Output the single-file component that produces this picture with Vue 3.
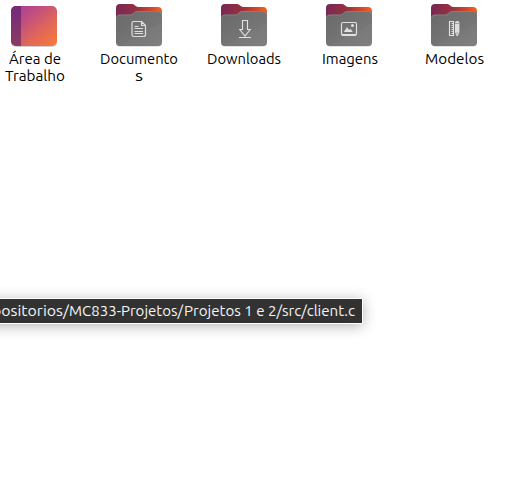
<script setup>
const items = [
  { kind: 'desktop', dx: 1, lines: [{ text: 'Área de', w: 52 }, { text: 'Trabalho', w: 60 }] },
  { kind: 'documents', dx: 0, lines: [{ text: 'Documento', w: 78 }, { text: 's', w: 8 }] },
  { kind: 'downloads', dx: 0, lines: [{ text: 'Downloads', w: 74 }] },
  { kind: 'pictures', dx: 1, lines: [{ text: 'Imagens', w: 56 }] },
  { kind: 'templates', dx: 0.5, lines: [{ text: 'Modelos', w: 59 }] },
]
</script>

<template>
  <main class="desktop">
    <section class="grid">
      <article v-for="item in items" :key="item.kind" class="item">
        <svg class="icon" width="48" height="48" viewBox="0 0 48 48">
          <defs>
            <linearGradient id="desk" x1="0" y1="0" x2="1" y2="1">
              <stop offset="0" stop-color="#a83a98" />
              <stop offset=".3" stop-color="#bd4c83" />
              <stop offset=".65" stop-color="#e16758" />
              <stop offset="1" stop-color="#fa7b36" />
            </linearGradient>
            <linearGradient id="side" x1="0" y1="0" x2="0" y2="1">
              <stop offset="0" stop-color="#75297a" />
              <stop offset="1" stop-color="#8a3c62" />
            </linearGradient>
            <linearGradient id="back" x1="0" y1="0" x2="1" y2="0">
              <stop offset="0" stop-color="#782854" />
              <stop offset=".45" stop-color="#98303f" />
              <stop offset=".8" stop-color="#d84a28" />
              <stop offset="1" stop-color="#f86126" />
            </linearGradient>
            <linearGradient id="front" x1="0" y1="0" x2="1" y2="1">
              <stop offset="0" stop-color="#696969" />
              <stop offset="1" stop-color="#7d7d7d" />
            </linearGradient>
            <clipPath id="deskclip"><rect x="1" y="6" width="46" height="40" rx="5" /></clipPath>
          </defs>
          <g v-if="item.kind === 'desktop'">
            <rect x="1" y="7" width="46" height="40" rx="5" fill="#000" opacity=".18" />
            <g clip-path="url(#deskclip)">
              <rect x="1" y="6" width="46" height="40" fill="url(#desk)" />
              <rect x="1" y="6" width="10" height="40" fill="url(#side)" />
            </g>
          </g>
          <g v-else>
            <path d="M1 18V8q0-4 4-4h12q1.500 0 2.500 1l1.500 1.200q1 .8 2.500.8H43q4 0 4 4v7z" fill="url(#back)" />
            <path d="M1 19h46V42q0 4.500-4 4.500H5q-4 0-4-4.500z" fill="#000" opacity=".22" />
            <path d="M1 18.500q0-4 4-4h10q1.500 0 2.700-1l2-1.700q1-.8 2.500-.8H43q4 0 4 4V42q0 4-4 4H5q-4 0-4-4z" fill="url(#front)" />
            <path d="M1.500 18q.5-3 3.500-3h10q1.700 0 3-1l2-1.700q1-.8 2.300-.8H43q3 0 3.500 3" fill="none" stroke="#8c8c8c" stroke-width=".6" />
            <path d="M4 45.500L46.500 23V42q0 3.500-3.500 3.500z" fill="#fff" opacity=".025" />
            <g v-if="item.kind === 'documents'" fill="none" stroke="#dedede" stroke-width="1.200" stroke-linejoin="round">
              <path d="M18.500 21.500h8l4 4v9q0 2-2 2h-10q-1.500 0-1.500-2V23q0-1.500 1.500-1.500zM26.500 21.500v4h4M19.500 26.500h4M19.500 28.500h8.500M19.500 31.500h8.500M19.500 33.500h8.500" />
            </g>
            <g v-else-if="item.kind === 'downloads'" fill="none" stroke="#e2e2e2" stroke-width="1.100">
              <path d="M22.500 20.500h5v9h2.700L25 36l-5.200-6.500h2.700zM19 37.500h12" />
            </g>
            <g v-else-if="item.kind === 'pictures'">
              <rect x="16.500" y="22.500" width="15" height="12.500" rx="1.500" fill="none" stroke="#e0e0e0" stroke-width="1.200" />
              <path d="M16.500 34h15v.5q0 1.500-1.500 1.500H18q-1.500 0-1.500-1.500zM18.800 32l3.200-5 2 3 1.500-1.300 2.300 3.300z" fill="#e0e0e0" />
              <circle cx="27.500" cy="25.500" r="1.500" fill="#e0e0e0" />
            </g>
            <g v-else>
              <path d="M19.500 21.500h4v14h-4zM21.500 23.500H23M21.500 25.500H23M21.500 27.500H23M21.500 29.500H23M21.500 31.500H23M21.500 33.500H23" fill="none" stroke="#e2e2e2" stroke-width="1.100" />
              <path d="M25 22.500q0-1.500 2.200-1.500t2.200 1.500V32l-1.600 4h-1.200L25 32z" fill="#dedede" />
              <path d="M25 23.500h4.400M27.200 32v2.500" stroke="#8f8f8f" stroke-width=".8" />
            </g>
          </g>
        </svg>
        <svg class="label" width="96" height="36" viewBox="0 0 96 36">
          <text
            v-for="(line, i) in item.lines" :key="line.text"
            :x="48 + item.dx - line.w / 2" :y="16 + i * 17"
            :textLength="line.w" lengthAdjust="spacingAndGlyphs"
          >{{ line.text }}</text>
        </svg>
      </article>
    </section>
    <div class="tooltip">
      <svg width="358" height="24" viewBox="0 0 358 24">
        <text x="-8" y="17" textLength="76.800" lengthAdjust="spacingAndGlyphs">positorios/</text>
        <text x="69" y="17" textLength="114" lengthAdjust="spacingAndGlyphs">MC833-Projetos/</text>
        <text x="184" y="17" textLength="171" lengthAdjust="spacingAndGlyphs">Projetos 1 e 2/src/client.c</text>
      </svg>
    </div>
  </main>
</template>

<style>
body { margin: 0; background: #fff; }
</style>

<style scoped>
.desktop {
  position: relative;
  width: 512px;
  height: 488px;
  overflow: hidden;
  background: #fff;
  font-family: Ubuntu, "Noto Sans", "Open Sans", sans-serif;
  font-size: 14.67px;
}
.grid {
  display: grid;
  grid-template-columns: repeat(5, 105px);
  margin-left: -19px;
}
.item { display: flex; flex-direction: column; align-items: center; }
.icon, .label { display: block; }
.label { overflow: visible; fill: #000; }
.tooltip {
  position: absolute;
  left: -20px;
  top: 298px;
  width: 381px;
  height: 24px;
  border: 1px solid #fff;
  background: #323232;
  box-shadow: 0 2px 14px rgba(0, 0, 0, .3);
}
.tooltip svg { display: block; margin-left: 19px; fill: #f5f5f5; }
</style>
